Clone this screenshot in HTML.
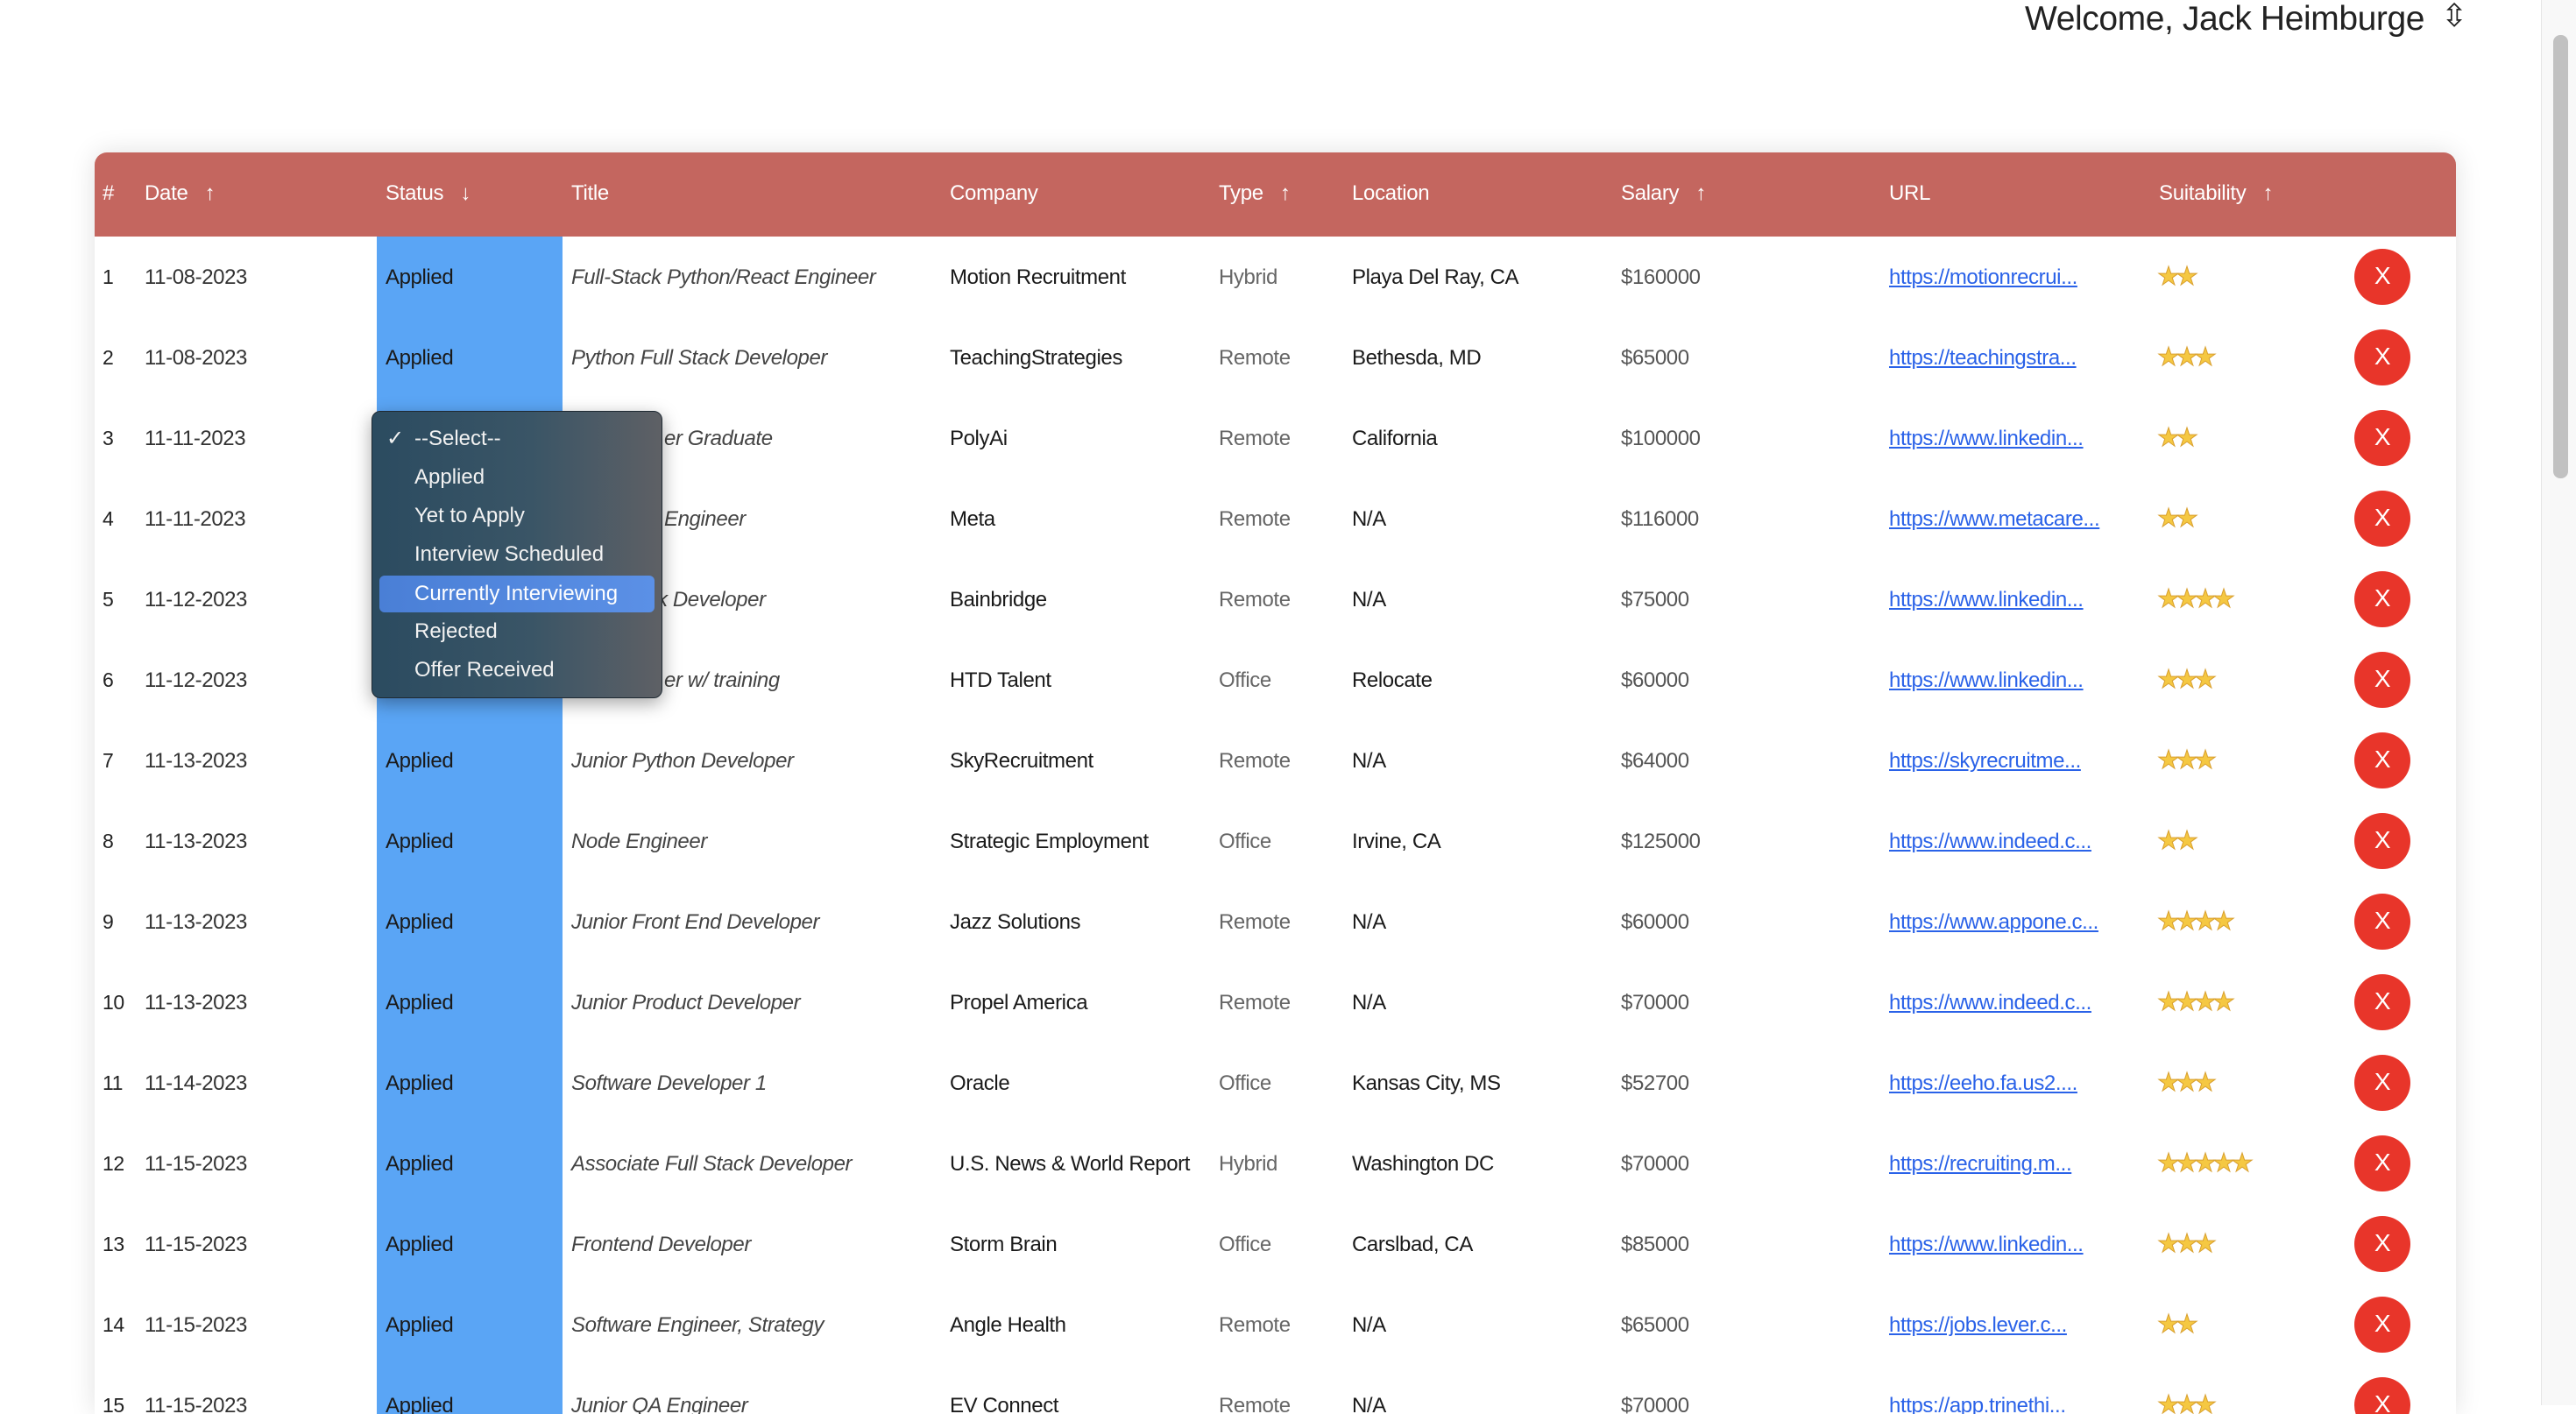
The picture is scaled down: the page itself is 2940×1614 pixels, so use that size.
<!DOCTYPE html>
<html><head><meta charset="utf-8">
<style>
html,body{margin:0;padding:0;width:2940px;height:1604px;overflow:hidden;background:#fff;font-family:"Liberation Sans",sans-serif;}
.page{position:absolute;left:0;top:0;width:2900px;height:1604px;background:#fff;}
.sb{position:absolute;left:2900px;top:0;width:40px;height:1604px;background:#f8f8f8;border-left:1px solid #e6e6e6;}
.thumb{position:absolute;left:2914px;top:40px;width:17px;height:506px;border-radius:8px;background:#c1c1c1;}
.welcome{position:absolute;left:2311px;top:0;font-size:39px;color:#222;letter-spacing:-0.4px;line-height:44px;}
.arr{position:absolute;left:2786px;top:0;font-size:36px;color:#222;line-height:36px;}
.card{position:absolute;left:108px;top:174px;width:2695px;height:1440px;background:#fff;box-shadow:0 0 30px rgba(0,0,0,0.12);border-top-left-radius:14px;border-top-right-radius:14px;overflow:hidden;}
.head{position:absolute;left:0;top:0;width:2695px;height:96px;background:#c4665f;color:#fff;font-size:24px;}
.head span{position:absolute;top:33px;letter-spacing:-0.3px;}
.blue{position:absolute;left:322px;top:96px;width:212px;height:1400px;background:#5aa5f5;}
.row{position:absolute;left:0;width:2695px;height:92px;font-size:24px;color:#222;letter-spacing:-0.4px;}
.row span{position:absolute;top:33px;white-space:nowrap;}
.n{left:9px;font-size:23px}
.d{left:57px;color:#333}
.s{left:332px;color:#1a1a1a}
.t{left:544px;font-style:italic;color:#444}
.c{left:976px;color:#1a1a1a}
.ty{left:1283px;color:#666}
.l{left:1435px;color:#1a1a1a}
.sa{left:1742px;color:#555}
.u{left:2048px;color:#2a62e8;text-decoration:underline}
.st{left:2354px;color:#f5c842;font-size:29px;letter-spacing:-5px;top:28px!important;-webkit-text-stroke:1px #d9a030}
.x{position:absolute;left:2579px;top:14px;width:64px;height:64px;border-radius:50%;background:#e8352a;color:#fff;font-size:28px;text-align:center;line-height:62px;}
.dd{position:absolute;left:424px;top:469px;width:330px;height:326px;border-radius:10px;background:linear-gradient(90deg,#2b4b60 0%,#3a5566 55%,#5e6065 100%);box-shadow:0 6px 20px rgba(0,0,0,0.35);border:1px solid #1f2a33;}
.dd div{position:absolute;left:48px;font-size:24px;color:#f2f2f2;line-height:30px;}
.hl{position:absolute;left:8px!important;top:187px;width:314px;height:42px;border-radius:6px;background:linear-gradient(90deg,#4a7fd6,#5b90e6);}
</style></head><body>
<div class="page">
<div class="welcome">Welcome, Jack Heimburge</div>
<div class="arr">⇳</div>
<div class="card">
<div class="head">
<span style="left:9px">#</span>
<span style="left:57px">Date &nbsp; ↑</span>
<span style="left:332px">Status &nbsp; ↓</span>
<span style="left:544px">Title</span>
<span style="left:976px">Company</span>
<span style="left:1283px">Type &nbsp; ↑</span>
<span style="left:1435px">Location</span>
<span style="left:1742px">Salary &nbsp; ↑</span>
<span style="left:2048px">URL</span>
<span style="left:2356px">Suitability &nbsp; ↑</span>
</div>
<div class="blue"></div>

<div class="row" style="top:96px"><span class="n">1</span><span class="d">11-08-2023</span><span class="s">Applied</span><span class="t">Full-Stack Python/React Engineer</span><span class="c">Motion Recruitment</span><span class="ty">Hybrid</span><span class="l">Playa Del Ray, CA</span><span class="sa">$160000</span><span class="u">https://motionrecrui...</span><span class="st">★★</span><div class="x">X</div></div>
<div class="row" style="top:188px"><span class="n">2</span><span class="d">11-08-2023</span><span class="s">Applied</span><span class="t">Python Full Stack Developer</span><span class="c">TeachingStrategies</span><span class="ty">Remote</span><span class="l">Bethesda, MD</span><span class="sa">$65000</span><span class="u">https://teachingstra...</span><span class="st">★★★</span><div class="x">X</div></div>
<div class="row" style="top:280px"><span class="n">3</span><span class="d">11-11-2023</span><span class="t" style="left:650px">er Graduate</span><span class="c">PolyAi</span><span class="ty">Remote</span><span class="l">California</span><span class="sa">$100000</span><span class="u">https://www.linkedin...</span><span class="st">★★</span><div class="x">X</div></div>
<div class="row" style="top:372px"><span class="n">4</span><span class="d">11-11-2023</span><span class="t" style="left:650px">Engineer</span><span class="c">Meta</span><span class="ty">Remote</span><span class="l">N/A</span><span class="sa">$116000</span><span class="u">https://www.metacare...</span><span class="st">★★</span><div class="x">X</div></div>
<div class="row" style="top:464px"><span class="n">5</span><span class="d">11-12-2023</span><span class="t" style="left:642px">k Developer</span><span class="c">Bainbridge</span><span class="ty">Remote</span><span class="l">N/A</span><span class="sa">$75000</span><span class="u">https://www.linkedin...</span><span class="st">★★★★</span><div class="x">X</div></div>
<div class="row" style="top:556px"><span class="n">6</span><span class="d">11-12-2023</span><span class="t" style="left:650px">er w/ training</span><span class="c">HTD Talent</span><span class="ty">Office</span><span class="l">Relocate</span><span class="sa">$60000</span><span class="u">https://www.linkedin...</span><span class="st">★★★</span><div class="x">X</div></div>
<div class="row" style="top:648px"><span class="n">7</span><span class="d">11-13-2023</span><span class="s">Applied</span><span class="t">Junior Python Developer</span><span class="c">SkyRecruitment</span><span class="ty">Remote</span><span class="l">N/A</span><span class="sa">$64000</span><span class="u">https://skyrecruitme...</span><span class="st">★★★</span><div class="x">X</div></div>
<div class="row" style="top:740px"><span class="n">8</span><span class="d">11-13-2023</span><span class="s">Applied</span><span class="t">Node Engineer</span><span class="c">Strategic Employment</span><span class="ty">Office</span><span class="l">Irvine, CA</span><span class="sa">$125000</span><span class="u">https://www.indeed.c...</span><span class="st">★★</span><div class="x">X</div></div>
<div class="row" style="top:832px"><span class="n">9</span><span class="d">11-13-2023</span><span class="s">Applied</span><span class="t">Junior Front End Developer</span><span class="c">Jazz Solutions</span><span class="ty">Remote</span><span class="l">N/A</span><span class="sa">$60000</span><span class="u">https://www.appone.c...</span><span class="st">★★★★</span><div class="x">X</div></div>
<div class="row" style="top:924px"><span class="n">10</span><span class="d">11-13-2023</span><span class="s">Applied</span><span class="t">Junior Product Developer</span><span class="c">Propel America</span><span class="ty">Remote</span><span class="l">N/A</span><span class="sa">$70000</span><span class="u">https://www.indeed.c...</span><span class="st">★★★★</span><div class="x">X</div></div>
<div class="row" style="top:1016px"><span class="n">11</span><span class="d">11-14-2023</span><span class="s">Applied</span><span class="t">Software Developer 1</span><span class="c">Oracle</span><span class="ty">Office</span><span class="l">Kansas City, MS</span><span class="sa">$52700</span><span class="u">https://eeho.fa.us2....</span><span class="st">★★★</span><div class="x">X</div></div>
<div class="row" style="top:1108px"><span class="n">12</span><span class="d">11-15-2023</span><span class="s">Applied</span><span class="t">Associate Full Stack Developer</span><span class="c">U.S. News &amp; World Report</span><span class="ty">Hybrid</span><span class="l">Washington DC</span><span class="sa">$70000</span><span class="u">https://recruiting.m...</span><span class="st">★★★★★</span><div class="x">X</div></div>
<div class="row" style="top:1200px"><span class="n">13</span><span class="d">11-15-2023</span><span class="s">Applied</span><span class="t">Frontend Developer</span><span class="c">Storm Brain</span><span class="ty">Office</span><span class="l">Carslbad, CA</span><span class="sa">$85000</span><span class="u">https://www.linkedin...</span><span class="st">★★★</span><div class="x">X</div></div>
<div class="row" style="top:1292px"><span class="n">14</span><span class="d">11-15-2023</span><span class="s">Applied</span><span class="t">Software Engineer, Strategy</span><span class="c">Angle Health</span><span class="ty">Remote</span><span class="l">N/A</span><span class="sa">$65000</span><span class="u">https://jobs.lever.c...</span><span class="st">★★</span><div class="x">X</div></div>
<div class="row" style="top:1384px"><span class="n">15</span><span class="d">11-15-2023</span><span class="s">Applied</span><span class="t">Junior QA Engineer</span><span class="c">EV Connect</span><span class="ty">Remote</span><span class="l">N/A</span><span class="sa">$70000</span><span class="u">https://app.trinethi...</span><span class="st">★★★</span><div class="x">X</div></div>
</div>

<div class="dd">
<div class="hl"></div>
<div style="left:16px;top:16px">✓</div>
<div style="top:16px">--Select--</div>
<div style="top:60px">Applied</div>
<div style="top:104px">Yet to Apply</div>
<div style="top:148px">Interview Scheduled</div>
<div style="top:193px;color:#fff">Currently Interviewing</div>
<div style="top:236px">Rejected</div>
<div style="top:280px">Offer Received</div>
</div>
</div>
<div class="sb"></div>
<div class="thumb"></div>
</body></html>
